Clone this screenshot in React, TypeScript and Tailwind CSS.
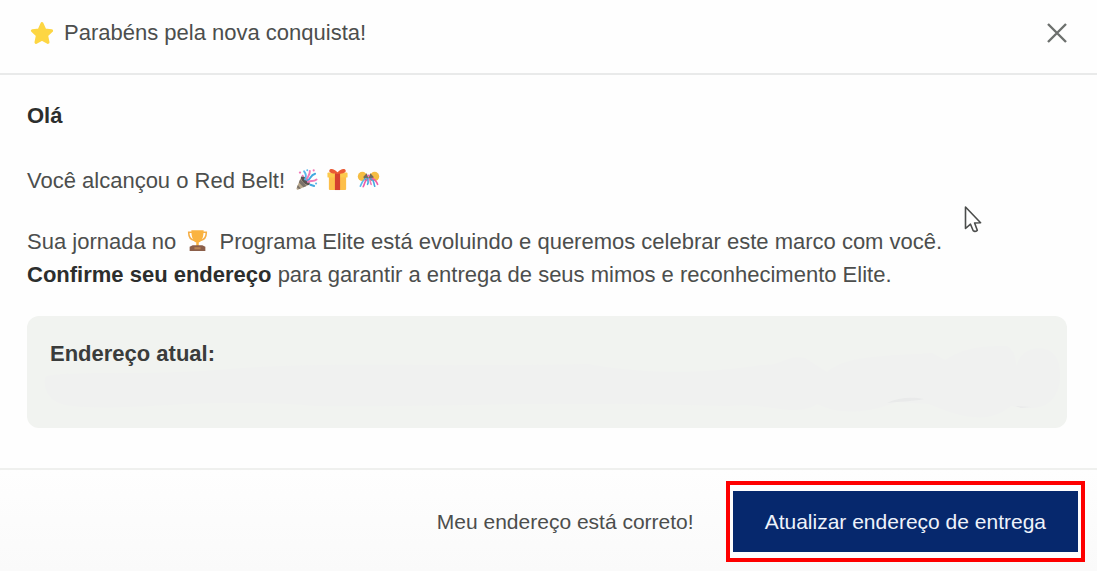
import type { ReactNode } from 'react'

type IconProps = { className?: string }

function StarIcon({ className }: IconProps) {
  return (
    <svg viewBox="0 0 24 24" className={className} aria-hidden="true">
      <path
        d="M12 2.6 14.8 8.9 21.6 9.7 16.6 14.4 18 21.4 12 18.2 6 21.4 7.4 14.4 2.4 9.7 9.2 8.9Z"
        fill="#fdd643"
        stroke="#fdd643"
        strokeWidth="3"
        strokeLinejoin="round"
      />
    </svg>
  )
}

function PopperIcon({ className }: IconProps) {
  return (
    <svg viewBox="0 0 24 24" className={className} aria-hidden="true">
      <path d="M6.5 9 1.5 21.5Q1.5 23 3 22.6L15 17.5Z" fill="#b9a88c" />
      <path d="M5.4 11.8 4 15.2 8.8 20.1 12 18.8ZM3 17.8 2 20.4 4.3 22 6 21.3Z" fill="#7b7269" />
      <ellipse cx="10.8" cy="13.2" rx="6" ry="2.7" transform="rotate(45 10.8 13.2)" fill="#5a5352" />
      <g fill="none" strokeWidth="2" strokeLinecap="round">
        <path d="M10.5 12C12 9 11.5 6 9.5 3.5" stroke="#5cb8ea" />
        <path d="M12.5 12.5C13 8 15.5 8.5 15.5 3" stroke="#f27ab8" />
        <path d="M13 13C17 11 15.5 7.5 21 6" stroke="#42a9e0" />
        <path d="M13.5 14.5C17 12.5 19 15 22.5 12" stroke="#f27ab8" />
        <path d="M16 17.5 20 18.8" stroke="#42a9e0" />
      </g>
      <g fill="#f27ab8">
        <circle cx="5.2" cy="4.8" r="1.2" />
        <circle cx="19.5" cy="2.5" r="1.1" />
        <circle cx="8" cy="8" r="1" />
      </g>
      <g fill="#5cb8ea">
        <circle cx="12.8" cy="2.3" r="1" />
        <circle cx="22" cy="16.2" r="1.1" />
      </g>
    </svg>
  )
}

function GiftIcon({ className }: IconProps) {
  return (
    <svg viewBox="0 0 24 24" className={className} aria-hidden="true">
      <rect x="3" y="8" width="18" height="15" rx="1" fill="#fdbf4a" />
      <rect x="1.5" y="4.8" width="21" height="5.2" rx="1" fill="#fcca4d" />
      <rect x="9.3" y="5" width="5.4" height="18" fill="#d5402f" />
      <path d="M12 4.8C9 .6 3.4 0 3.4 3.2 3.4 5.4 8 6.2 12 6.2 16 6.2 20.6 5.4 20.6 3.2 20.6 0 15 .6 12 4.8Z" fill="#ea5a34" />
    </svg>
  )
}

function ConfettiIcon({ className }: IconProps) {
  return (
    <svg viewBox="0 0 24 24" className={className} aria-hidden="true">
      <circle cx="5.6" cy="8.8" r="4.8" fill="#f5bd43" />
      <circle cx="18.4" cy="8.8" r="4.8" fill="#f5bd43" />
      <path d="M6.5 9.5 10 5.5 12.5 11 9 13.5ZM17.5 9.5 14 5.5 11.5 11 15 13.5Z" fill="#726a5a" />
      <g fill="none" strokeWidth="1.7" strokeLinecap="round">
        <path d="M9.5 11C6 12 5.5 15 3.5 19" stroke="#5cb8ea" />
        <path d="M10.5 12C7.5 14 8.5 16 6.5 19.5" stroke="#ef5da8" />
        <path d="M11.5 11C11 14 12.5 15 11 17" stroke="#42a9e0" />
        <path d="M13 11.5C14.5 14 13.5 15 14.8 17" stroke="#f27ab8" />
        <path d="M14.5 11C18.5 13 17 15.5 18.5 19" stroke="#42a9e0" />
        <path d="M16 11C20 12 19.8 14 21.5 17" stroke="#ef5da8" />
      </g>
      <circle cx="12" cy="8" r="1.2" fill="#ef5da8" />
    </svg>
  )
}

function TrophyIcon({ className }: IconProps) {
  return (
    <svg viewBox="0 0 24 24" className={className} aria-hidden="true">
      <path d="M6.5 3.5H2.8C2.8 8.5 4.5 11.5 9 12M17.5 3.5h3.7C21.2 8.5 19.5 11.5 15 12" fill="none" stroke="#f5ad44" strokeWidth="1.6" />
      <path d="M5.6 1.2H18.4C18.4 8.7 16.6 12.7 13.3 14.2V18H10.7V14.2C7.4 12.7 5.6 8.7 5.6 1.2Z" fill="#fab340" />
      <path d="M7 17H17L20.2 18.6V23H3.8V18.6Z" fill="#8b5f4a" />
      <rect x="8.8" y="19" width="6.4" height="2.2" fill="#b98454" />
    </svg>
  )
}

function Emoji({ label, children }: { label: string; children: ReactNode }) {
  return (
    <span role="img" aria-label={label} className="mx-1 inline-flex align-[-3px]">
      {children}
    </span>
  )
}

export default function App() {
  return (
    <div
      role="dialog"
      aria-labelledby="dialog-title"
      className="relative flex min-h-screen flex-col bg-[#fefefe] font-['Liberation_Sans',Arial,sans-serif] text-[22px] leading-[33px] text-[#4c4e4d]"
    >
      <header className="flex items-center justify-between border-b-2 border-[#e9eaea] pt-4 pr-[30px] pb-6 pl-[30px]">
        <h1 id="dialog-title" className="flex items-center gap-[10px]">
          <StarIcon className="h-6 w-6" />
          Parabéns pela nova conquista!
        </h1>
        <button type="button" aria-label="Fechar" className="text-[#6d706e]">
          <svg viewBox="0 0 20 20" className="h-5 w-5" fill="none" stroke="currentColor" strokeWidth="2.4">
            <path d="M1 1 19 19M19 1 1 19" />
          </svg>
        </button>
      </header>

      <main className="pt-6 pr-[30px] pb-10 pl-[27px]">
        <p className="mb-8 font-bold text-[#2c2e2d]">Olá</p>
        <p className="mb-7">
          Você alcançou o Red Belt!{' '}
          <Emoji label="festa"><PopperIcon className="h-[23px] w-[23px]" /></Emoji>
          <Emoji label="presente"><GiftIcon className="h-[23px] w-[23px]" /></Emoji>
          <Emoji label="confete"><ConfettiIcon className="h-[23px] w-[23px]" /></Emoji>
        </p>
        <p className="mb-[25px]">
          Sua jornada no <Emoji label="troféu"><TrophyIcon className="h-[23px] w-[23px]" /></Emoji> Programa Elite está
          evoluindo e queremos celebrar este marco com você.
          <br />
          <strong className="font-bold text-[#2c2e2d]">Confirme seu endereço</strong> para garantir a entrega de seus
          mimos e reconhecimento Elite.
        </p>

        <section className="relative h-28 overflow-hidden rounded-xl bg-[#f1f3f0] px-[23px] py-[21px]">
          <svg
            viewBox="0 0 1040 112"
            preserveAspectRatio="none"
            className="absolute inset-0 h-full w-full"
            aria-hidden="true"
          >
            <path
              d="M18 62C20 54 110 60 190 54 300 44 420 52 560 48 640 62 700 54 735 49 755 50 760 38 778 42L800 56C820 38 870 40 905 37L918 44C940 30 960 30 980 30 990 36 988 48 990 50 992 30 1026 24 1032 48 1036 72 1028 92 1004 92L984 90C960 110 930 100 902 88L870 86C845 96 815 100 790 88 770 102 740 86 700 90 500 84 420 92 290 90 170 80 110 96 45 90 24 88 16 76 18 62Z"
              fill="#f0f1f0"
            />
            <path d="M860 87C872 81 886 81 897 83 884 86 872 85 860 87ZM988 90 1004 91 994 92Z" fill="#e9eaea" />
          </svg>
          <h2 className="relative font-bold text-[#3a3c3b]">Endereço atual:</h2>
        </section>
      </main>

      <footer className="flex flex-1 flex-wrap items-start justify-end gap-8 border-t-2 border-[#eff0ee] bg-linear-to-b from-[#fefefe] to-[#fafafa] pt-[11px] pr-3 pb-2 text-[21px]">
        <button type="button" className="mt-6">
          Meu endereço está correto!
        </button>
        <div className="border-4 border-[#fe0000] bg-[#fdfdfe] px-[3px] py-[6px]">
          <button type="button" className="block bg-[#06286d] px-8 py-[14px] text-[#eef3fb]">
            Atualizar endereço de entrega
          </button>
        </div>
      </footer>

      <svg
        viewBox="0 0 18 28"
        className="pointer-events-none absolute top-[205px] left-[964px] h-7 w-[18px]"
        aria-hidden="true"
      >
        <path
          d="M1.5 2V23.5L6.5 19.2 9.2 25.7Q11 27.2 13.3 25.3L10.6 18 16.6 17.7Z"
          fill="#fff"
          stroke="#4b4d4c"
          strokeWidth="1.6"
          strokeLinejoin="round"
        />
      </svg>
    </div>
  )
}
